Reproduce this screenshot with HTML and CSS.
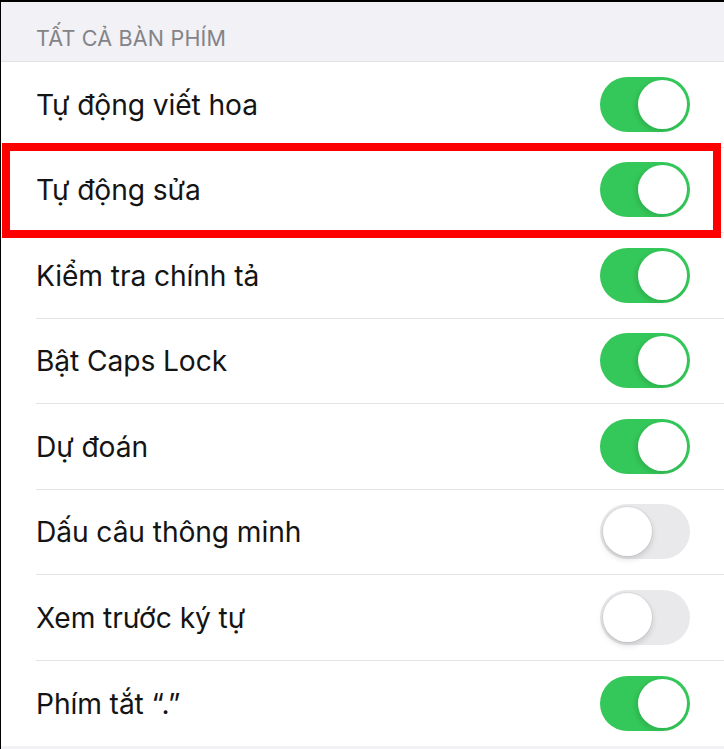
FILE: index.html
```html
<!DOCTYPE html>
<html lang="vi">
<head>
  <meta charset="UTF-8">
  <meta name="viewport" content="width=device-width, initial-scale=1.0">
  <title>Bàn phím</title>
  <link rel="stylesheet" href="styles.css">
</head>
<body>
  <div class="screen">
    <div class="section-header">TẤT CẢ BÀN PHÍM</div>

    <div class="list">
      <div class="row">
        <div class="row-inner">
          <span class="label">Tự động viết hoa</span>
          <span class="toggle on"><span class="knob"></span></span>
        </div>
      </div>
      <div class="row highlighted">
        <div class="row-inner">
          <span class="label">Tự động sửa</span>
          <span class="toggle on"><span class="knob"></span></span>
        </div>
      </div>
      <div class="row">
        <div class="row-inner">
          <span class="label">Kiểm tra chính tả</span>
          <span class="toggle on"><span class="knob"></span></span>
        </div>
      </div>
      <div class="row">
        <div class="row-inner">
          <span class="label">Bật Caps Lock</span>
          <span class="toggle on"><span class="knob"></span></span>
        </div>
      </div>
      <div class="row">
        <div class="row-inner">
          <span class="label">Dự đoán</span>
          <span class="toggle on"><span class="knob"></span></span>
        </div>
      </div>
      <div class="row">
        <div class="row-inner">
          <span class="label">Dấu câu thông minh</span>
          <span class="toggle"><span class="knob"></span></span>
        </div>
      </div>
      <div class="row">
        <div class="row-inner">
          <span class="label">Xem trước ký tự</span>
          <span class="toggle"><span class="knob"></span></span>
        </div>
      </div>
      <div class="row last">
        <div class="row-inner">
          <span class="label">Phím tắt “.”</span>
          <span class="toggle on"><span class="knob"></span></span>
        </div>
      </div>
    </div>
  </div>
</body>
</html>
```

FILE: styles.css
```css
html, body {
  margin: 0;
  height: 100%;
}

body {
  background-color: #000;
  font-family: Inter, "Noto Sans", sans-serif;
  overflow: hidden;
}

.screen {
  margin: 2px 0 0 1px;
  height: calc(100% - 2px);
  background-color: #f1f1f6;
}

.section-header {
  height: 60px;
  box-sizing: border-box;
  padding: 23px 0 0 35px;
  font-size: 21.5px;
  color: #838388;
  letter-spacing: 0.2px;
  border-bottom: 1px solid #e2e2e6;
}

.list {
  background-color: #fff;
}

.row {
  position: relative;
  height: 85.5px;
  padding-left: 35px;
}

.row-inner {
  height: 100%;
  box-sizing: border-box;
  display: flex;
  align-items: center;
  justify-content: space-between;
  padding-right: 34px;
  border-bottom: 1px solid #e4e4e7;
}

.row.last .row-inner {
  border-bottom: none;
}

.label {
  font-size: 28.2px;
  color: #141414;
  letter-spacing: -0.1px;
  padding-top: 1px;
}

.toggle {
  width: 90px;
  height: 55px;
  box-sizing: border-box;
  border-radius: 28px;
  background-color: #e9e9ec;
  display: flex;
  align-items: center;
  padding: 3px;
}

.toggle .knob {
  width: 49px;
  height: 49px;
  border-radius: 50%;
  background-color: #fff;
  box-shadow: 0 3px 6px rgba(0, 0, 0, 0.15), 0 0 0 1px rgba(0, 0, 0, 0.05);
}

.toggle.on {
  background-color: #34c759;
  justify-content: flex-end;
}

.toggle.on .knob {
  box-shadow: -2px 2px 5px rgba(0, 0, 0, 0.12);
}

.highlighted::after {
  content: "";
  position: absolute;
  top: -4.5px;
  bottom: -4.5px;
  left: 1px;
  right: 3px;
  border: 8px solid #ff0000;
  pointer-events: none;
}
```
